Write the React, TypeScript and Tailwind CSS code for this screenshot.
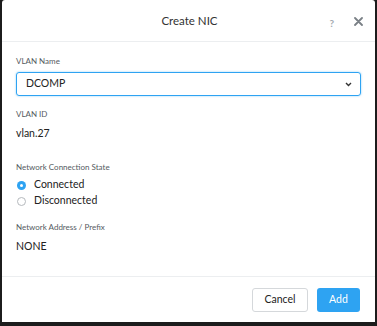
import React from "react";

export default function App() {
  const font = { fontFamily: "Lato, 'Open Sans', sans-serif" };
  return (
    <div className="w-[377px] h-[326px] bg-[#1c1c1c] flex flex-col overflow-hidden" style={font}>
      <div className="mx-[2px] flex-1 bg-white rounded-t-[3px] flex flex-col mb-[4px]">
        {/* header */}
        <div className="h-[42px] border-b border-[#eceef0] flex items-center relative shrink-0">
          <div className="flex-1 text-center text-[11.5px] text-[#333] pl-[2px]">Create NIC</div>
          <div className="absolute right-[41px] top-[16px] text-[10px] text-[#a5aab0] font-bold">?</div>
          <svg className="absolute right-[12px] top-[17px]" width="9" height="9" viewBox="0 0 9 9">
            <path d="M1 1L8 8M8 1L1 8" stroke="#7a8086" strokeWidth="1.8" strokeLinecap="round" />
          </svg>
        </div>
        {/* body */}
        <div className="flex-1 px-[14px] pt-[13px] flex flex-col">
          <div className="text-[8px] text-[#555b61] leading-[12px]">VLAN Name</div>
          <div className="mt-[5px] h-[24px] border border-[#2ea3f2] rounded-[3px] shadow-[0_0_2px_rgba(46,163,242,0.6)] flex items-center pl-[9px] pr-[8px] justify-between">
            <span className="text-[10.5px] text-[#222]">DCOMP</span>
            <svg width="7" height="5" viewBox="0 0 7 5">
              <path d="M1 1L3.5 3.5L6 1" stroke="#333" strokeWidth="1.4" fill="none" />
            </svg>
          </div>
          <div className="mt-[12px] text-[8px] text-[#555b61] leading-[12px]">VLAN ID</div>
          <div className="mt-[7px] text-[10.5px] text-[#222] leading-[12px]">vlan.27</div>
          <div className="mt-[22px] text-[8px] text-[#555b61] leading-[12px]">Network Connection State</div>
          <div className="mt-[5px] flex items-center gap-[8px] h-[14px]">
            <span className="w-[9px] h-[9px] rounded-full bg-[#2ea3f2] flex items-center justify-center ml-[1px]">
              <span className="w-[3px] h-[3px] rounded-full bg-white" />
            </span>
            <span className="text-[10.5px] text-[#222]">Connected</span>
          </div>
          <div className="mt-[2px] flex items-center gap-[8px] h-[14px]">
            <span className="w-[9px] h-[9px] rounded-full border border-[#b5b9bd] bg-white ml-[1px]" />
            <span className="text-[10.5px] text-[#222]">Disconnected</span>
          </div>
          <div className="mt-[13px] text-[8px] text-[#555b61] leading-[12px]">Network Address / Prefix</div>
          <div className="mt-[7px] text-[10.5px] text-[#222] leading-[12px]">NONE</div>
        </div>
        {/* footer */}
        <div className="h-[46px] border-t border-[#eceef0] flex items-center justify-end gap-[9px] pr-[15px] shrink-0">
          <button className="h-[24px] w-[56px] rounded-[3px] border border-[#d5d8db] bg-white text-[10.5px] text-[#222]">Cancel</button>
          <button className="h-[24px] w-[43px] rounded-[3px] bg-[#2ea3f2] text-[10.5px] text-white">Add</button>
        </div>
      </div>
    </div>
  );
}
